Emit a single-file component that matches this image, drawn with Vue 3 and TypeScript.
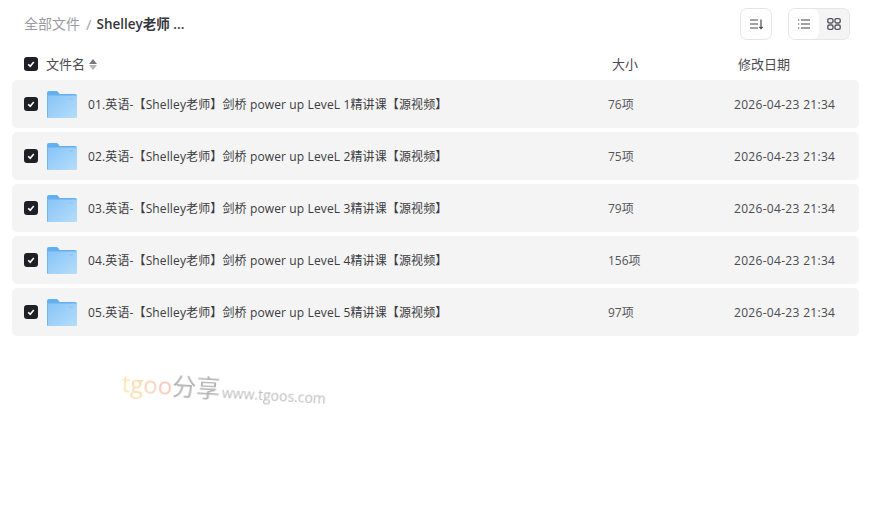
<script setup lang="ts">
interface FileRow {
  name: string
  size: string
  date: string
}

const files: FileRow[] = [
  { name: '01.英语-【Shelley老师】剑桥 power up LeveL 1精讲课【源视频】', size: '76项', date: '2026-04-23 21:34' },
  { name: '02.英语-【Shelley老师】剑桥 power up LeveL 2精讲课【源视频】', size: '75项', date: '2026-04-23 21:34' },
  { name: '03.英语-【Shelley老师】剑桥 power up LeveL 3精讲课【源视频】', size: '79项', date: '2026-04-23 21:34' },
  { name: '04.英语-【Shelley老师】剑桥 power up LeveL 4精讲课【源视频】', size: '156项', date: '2026-04-23 21:34' },
  { name: '05.英语-【Shelley老师】剑桥 power up LeveL 5精讲课【源视频】', size: '97项', date: '2026-04-23 21:34' }
]
</script>

<template>
  <div class="page">
    <div class="toolbar">
      <div class="crumbs">
        <span class="crumb-root">全部文件</span>
        <span class="crumb-sep">/</span>
        <span class="crumb-current">Shelley老师 ...</span>
      </div>
      <button class="tool-btn sort-btn" type="button">
        <svg width="16" height="16" viewBox="0 0 16 16" fill="none" stroke="#4a4a52" stroke-width="1.2">
          <path d="M2 4h8M2 8h8M2 12h8" />
          <path d="M13 3.5v9M11.3 10.8 13 12.6l1.7-1.8" />
        </svg>
      </button>
      <div class="view-switch">
        <button class="view-btn active" type="button">
          <svg width="16" height="16" viewBox="0 0 16 16" fill="none" stroke="#3f3f46" stroke-width="1.2">
            <path d="M5 4h9M5 8h9M5 12h9M2 4h1.3M2 8h1.3M2 12h1.3" />
          </svg>
        </button>
        <button class="view-btn" type="button">
          <svg width="16" height="16" viewBox="0 0 16 16" fill="none" stroke="#55555c" stroke-width="1.4">
            <rect x="1.8" y="2.6" width="5.2" height="4.4" rx="1.4" />
            <rect x="9" y="2.6" width="5.2" height="4.4" rx="1.4" />
            <rect x="1.8" y="9" width="5.2" height="4.4" rx="1.4" />
            <rect x="9" y="9" width="5.2" height="4.4" rx="1.4" />
          </svg>
        </button>
      </div>
    </div>

    <div class="head">
      <span class="check">
        <svg width="10" height="10" viewBox="0 0 10 10" fill="none" stroke="#fff" stroke-width="1.6">
          <path d="M2.2 5.2 4.2 7.2 7.8 3" />
        </svg>
      </span>
      <span class="head-name">文件名</span>
      <span class="sort-arrows">
        <i class="arrow-up"></i>
        <i class="arrow-down"></i>
      </span>
      <span class="head-size">大小</span>
      <span class="head-date">修改日期</span>
    </div>

    <div class="list">
      <div v-for="file in files" :key="file.name" class="row">
        <span class="check">
          <svg width="10" height="10" viewBox="0 0 10 10" fill="none" stroke="#fff" stroke-width="1.6">
            <path d="M2.2 5.2 4.2 7.2 7.8 3" />
          </svg>
        </span>
        <svg class="folder" width="30" height="27" viewBox="0 0 30 27">
          <defs>
            <linearGradient id="folderFill" x1="0" y1="0" x2="1" y2="1">
              <stop offset="0" stop-color="#86c4f7" />
              <stop offset="1" stop-color="#b6ddfb" />
            </linearGradient>
          </defs>
          <path d="M0 2a2 2 0 0 1 2-2h7.5a2 2 0 0 1 1.5.7L12.5 3H28a2 2 0 0 1 2 2v3H0Z" fill="#62b0ef" />
          <path d="M0 4.5h30V26a1 1 0 0 1-1 1H1a1 1 0 0 1-1-1Z" fill="url(#folderFill)" />
          <path d="M.5 4.5V26.5" stroke="#6db8f3" />
          <rect x="22" y="7" width="4" height="2" fill="#94c9f3" />
        </svg>
        <span class="name">{{ file.name }}</span>
        <span class="size">{{ file.size }}</span>
        <span class="date">{{ file.date }}</span>
      </div>
    </div>

    <div class="watermark">
      <span class="wm-t">t</span><span class="wm-g">g</span><span class="wm-o1">o</span><span class="wm-o2">o</span><span class="wm-cn">分享</span>
      <span class="wm-url">www.tgoos.com</span>
    </div>
  </div>
</template>

<style>
html,
body {
  margin: 0;
  background: #fff;
}
</style>

<style scoped>
.page {
  position: relative;
  width: 874px;
  height: 514px;
  overflow: hidden;
  box-sizing: border-box;
  padding: 8px 15px 0 12px;
  font-family: 'Open Sans', 'Noto Sans CJK SC', sans-serif;
  color: #3b3b42;
}

.toolbar {
  display: flex;
  align-items: center;
  height: 32px;
  padding: 0 9px 0 12px;
}

.crumbs {
  flex: 1;
  display: flex;
  align-items: center;
  font-size: 14px;
  line-height: 16px;
  margin-top: -1px;
}

.crumb-root {
  color: #9a9a9f;
}

.crumb-sep {
  margin: 0 5px 0 6px;
  font-size: 15px;
  color: #a3a3a8;
}

.crumb-current {
  color: #36363d;
  font-weight: 600;
  font-size: 13.5px;
}

.tool-btn,
.view-switch {
  box-sizing: border-box;
  height: 32px;
  border: 1px solid #e6e6e8;
  border-radius: 7px;
  background: #fff;
  padding: 0;
}

.sort-btn {
  width: 32px;
  margin-right: 16px;
  display: flex;
  align-items: center;
  justify-content: center;
}

.view-switch {
  width: 62px;
  display: flex;
  overflow: hidden;
  background: #f4f4f5;
}

.view-btn {
  flex: 1;
  border: 0;
  padding: 0;
  background: transparent;
  display: flex;
  align-items: center;
  justify-content: center;
}

.view-btn.active {
  background: #fff;
  border-radius: 0 7px 7px 0;
}

.head {
  display: flex;
  align-items: center;
  height: 40px;
  box-sizing: border-box;
  padding: 8px 0 0 12px;
  font-size: 13px;
  line-height: 16px;
  color: #4a4a50;
}

.check {
  flex: none;
  width: 14px;
  height: 14px;
  border-radius: 3px;
  background: #1f2026;
  display: flex;
  align-items: center;
  justify-content: center;
}

.head-name {
  margin-left: 8px;
}

.sort-arrows {
  display: flex;
  flex-direction: column;
  gap: 1px;
  margin-left: 4px;
}

.arrow-up,
.arrow-down {
  width: 0;
  height: 0;
  border-left: 4px solid transparent;
  border-right: 4px solid transparent;
}

.arrow-up {
  border-bottom: 5px solid #77777c;
}

.arrow-down {
  border-top: 5px solid #b4b4b8;
}

.head-size {
  margin-left: 515px;
  width: 126px;
}

.list {
  display: flex;
  flex-direction: column;
  gap: 4px;
}

.row {
  display: flex;
  align-items: center;
  height: 48px;
  padding-left: 12px;
  border-radius: 5px;
  background: #f4f4f4;
  font-size: 12px;
}

.folder {
  flex: none;
  margin: 1px 0 0 9px;
}

.name {
  flex: none;
  width: 520px;
  margin-left: 11px;
  white-space: nowrap;
  letter-spacing: 0.13px;
}

.size {
  flex: none;
  width: 126px;
  color: #55555b;
}

.date {
  color: #4a4a50;
  letter-spacing: 0.31px;
}

.watermark {
  position: absolute;
  left: 122px;
  top: 364px;
  white-space: nowrap;
  transform: rotate(3.3deg);
  transform-origin: left center;
  font-size: 24px;
  color: #b9b9b9;
  filter: blur(0.4px);
}

.wm-t {
  color: #fde6b2;
}

.wm-g {
  color: #fcdcaf;
}

.wm-o1 {
  color: #fbd3bb;
}

.wm-o2 {
  color: #f9c5b8;
}

.wm-cn {
  color: #b3b3b3;
}

.wm-url {
  margin-left: 2px;
  font-size: 14px;
  color: #bdbdbd;
}
</style>
